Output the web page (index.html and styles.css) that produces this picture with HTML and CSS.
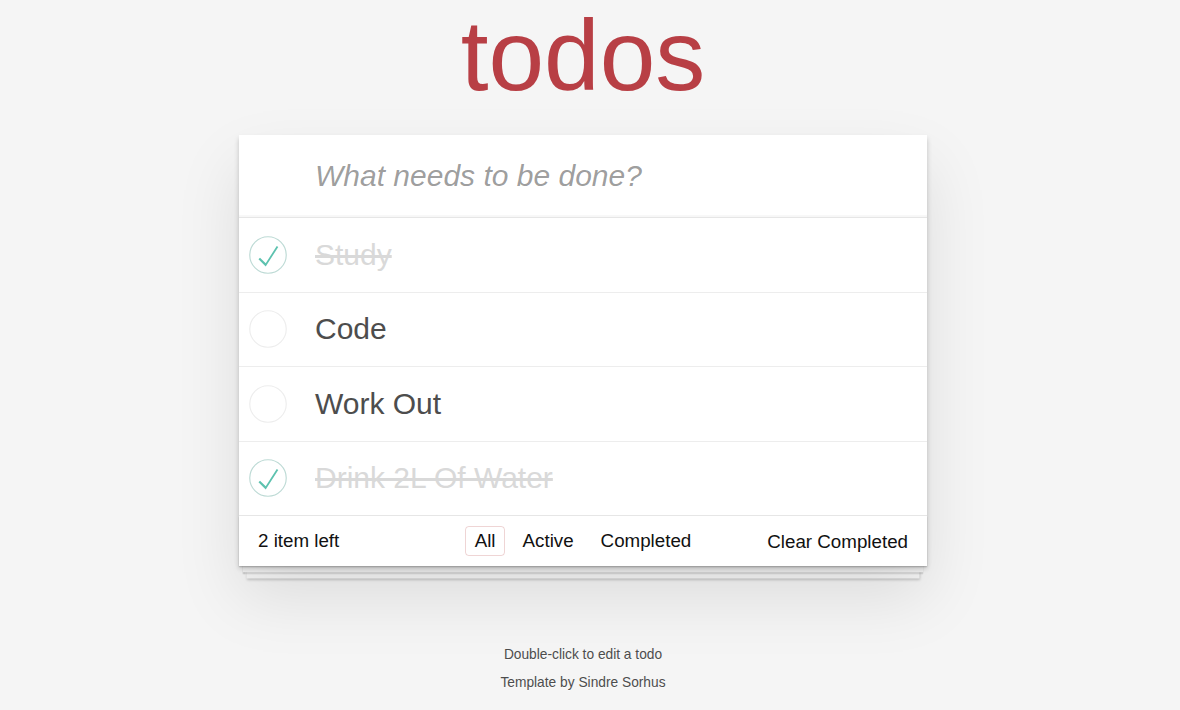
FILE: index.html
```html
<!DOCTYPE html>
<html lang="en">

<head>
    <meta charset="UTF-8">
    <meta name="viewport" content="width=device-width, initial-scale=1.0">
    <title>Todos</title>
    <link rel="stylesheet" href="styles.css">
</head>

<body>
    <section class="todoapp">
        <header class="header">
            <h1>todos</h1>
        </header>
        <div class="card">
            <input class="new-todo" placeholder="What needs to be done?">
            <ul class="todo-list">
                <li class="completed">
                    <svg class="toggle" width="38" height="38" viewBox="0 0 100 100">
                        <circle cx="50" cy="50" r="48" fill="none" stroke="#bddad5" stroke-width="3" />
                        <path fill="#5dc2af" d="M73 26L44 72 29 57l-4 4 19 19 33-51z" />
                    </svg>
                    <label>Study</label>
                </li>
                <li>
                    <svg class="toggle" width="38" height="38" viewBox="0 0 100 100">
                        <circle cx="50" cy="50" r="48" fill="none" stroke="#ededed" stroke-width="3" />
                    </svg>
                    <label>Code</label>
                </li>
                <li>
                    <svg class="toggle" width="38" height="38" viewBox="0 0 100 100">
                        <circle cx="50" cy="50" r="48" fill="none" stroke="#ededed" stroke-width="3" />
                    </svg>
                    <label>Work Out</label>
                </li>
                <li class="completed">
                    <svg class="toggle" width="38" height="38" viewBox="0 0 100 100">
                        <circle cx="50" cy="50" r="48" fill="none" stroke="#bddad5" stroke-width="3" />
                        <path fill="#5dc2af" d="M73 26L44 72 29 57l-4 4 19 19 33-51z" />
                    </svg>
                    <label>Drink 2L Of Water</label>
                </li>
            </ul>
            <footer class="footer">
                <span class="todo-count">2 item left</span>
                <ul class="filters">
                    <li><a href="#/" class="selected">All</a></li><li><a href="#/active">Active</a></li><li><a href="#/completed">Completed</a></li>
                </ul>
                <button class="clear-completed">Clear Completed</button>
            </footer>
        </div>
    </section>
    <footer class="info">
        <p>Double-click to edit a todo</p>
        <p>Template by <a href="#">Sindre Sorhus</a></p>
    </footer>
</body>

</html>
```

FILE: styles.css
```css
* {
    margin: 0;
    padding: 0;
    box-sizing: border-box;
}

html,
body {
    height: 100%;
}

body {
    background: #f5f5f5;
    font-family: "Liberation Sans", Arial, sans-serif;
    color: #111111;
    padding-right: 14px;
}

.todoapp {
    width: 688px;
    margin: 0 auto;
}

.header h1 {
    font-size: 100px;
    line-height: 100px;
    font-weight: normal;
    text-align: center;
    color: #b83f45;
    padding-top: 5px;
    margin-bottom: 30px;
}

.card {
    position: relative;
    background: #fff;
    box-shadow: 0 2.5px 5px 0 rgba(0, 0, 0, 0.2), 0 31px 62px 0 rgba(0, 0, 0, 0.1);
}

.new-todo {
    display: block;
    width: 100%;
    border: none;
    outline: none;
    background: transparent;
    font-family: inherit;
    font-size: 30px;
    line-height: 42px;
    height: 82px;
    padding: 20px 20px 20px 76px;
    color: #4d4d4d;
    box-shadow: inset 0 -2px 1px rgba(0, 0, 0, 0.03);
}

.new-todo::placeholder {
    font-style: italic;
    color: rgba(0, 0, 0, 0.4);
}

.todo-list {
    list-style: none;
    border-top: 1px solid #e6e6e6;
}

.todo-list li {
    display: flex;
    align-items: center;
    border-bottom: 1px solid #ededed;
}

.todo-list li:last-child {
    border-bottom: none;
}

.toggle {
    flex: none;
    margin-left: 10px;
}

.todo-list label {
    flex: 1;
    font-size: 30px;
    line-height: 36px;
    padding: 18.75px 19px 18.75px 28px;
    color: #4d4d4d;
}

.todo-list li.completed label {
    color: #d9d9d9;
    text-decoration: line-through;
}

.footer {
    position: relative;
    display: grid;
    grid-template-columns: 1fr auto 1fr;
    align-items: center;
    height: 51px;
    padding: 0 19px 1px;
    border-top: 1px solid #e6e6e6;
    font-size: 18.75px;
    line-height: 25px;
}

.footer:before {
    content: '';
    position: absolute;
    right: 0;
    bottom: 0;
    left: 0;
    height: 50px;
    overflow: hidden;
    z-index: -1;
    box-shadow: 0 1.25px 1.25px rgba(0, 0, 0, 0.2),
        0 10px 0 -3.75px #f6f6f6,
        0 11.25px 1.25px -3.75px rgba(0, 0, 0, 0.2),
        0 20px 0 -7.5px #f6f6f6,
        0 21.25px 2.5px -7.5px rgba(0, 0, 0, 0.2);
}

.todo-count {
    justify-self: start;
}

.filters {
    list-style: none;
    display: flex;
}

.filters a {
    display: block;
    margin: 0 3.75px;
    padding: 1px 8.75px 2px;
    color: inherit;
    text-decoration: none;
    border: 1.25px solid transparent;
    border-radius: 3.75px;
}

.filters a.selected {
    border-color: rgba(175, 47, 47, 0.2);
}

.clear-completed {
    justify-self: end;
    border: none;
    background: none;
    font-family: inherit;
    font-size: inherit;
    line-height: inherit;
    color: inherit;
    padding-top: 1px;
}

.info {
    margin-top: 82px;
    text-align: center;
    font-size: 13.75px;
    color: #4d4d4d;
    text-shadow: 0 1px 0 rgba(255, 255, 255, 0.5);
}

.info p {
    line-height: 1;
    margin-bottom: 14px;
}

.info a {
    color: inherit;
    text-decoration: none;
}
```
